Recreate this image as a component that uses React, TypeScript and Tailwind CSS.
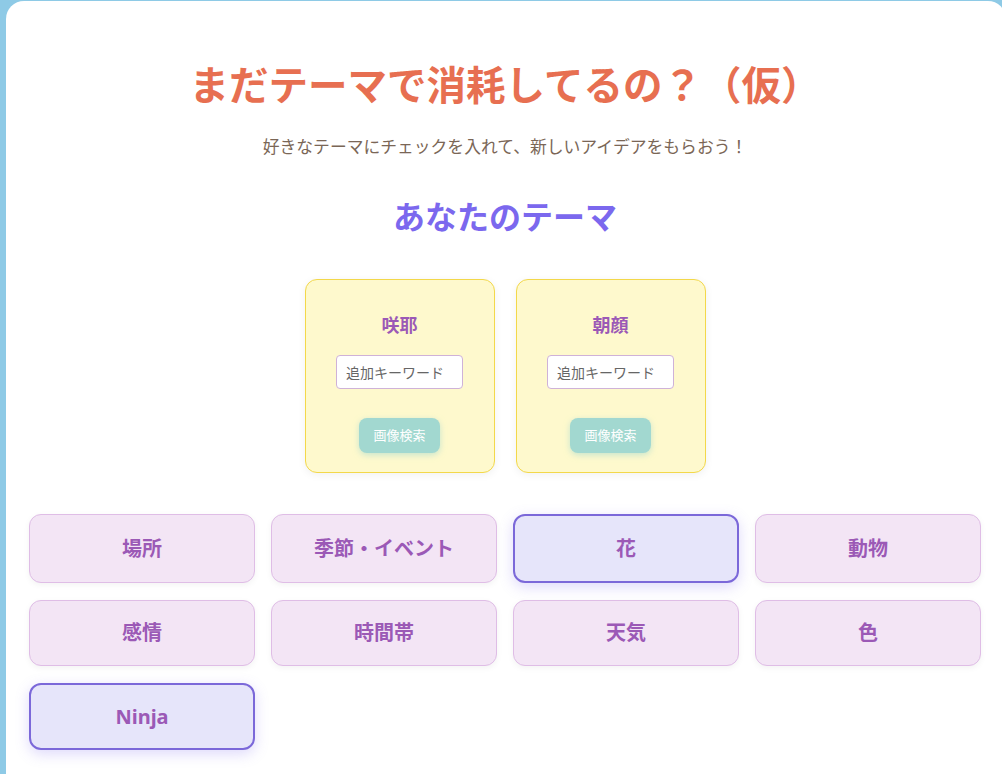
import React, { useState } from 'react';

const FONT = { fontFamily: '"Noto Sans", "Noto Sans CJK JP", sans-serif' };

const themes = ['咲耶', '朝顔'];

const categories = [
    '場所',
    '季節・イベント',
    '花',
    '動物',
    '感情',
    '時間帯',
    '天気',
    '色',
    'Ninja',
];

function ThemeCard({ name }: { name: string }) {
    return (
        <div className="flex w-[190px] flex-col items-center rounded-xl border border-[#f3d84a] bg-[#fef9cd] pt-[33px] pb-[19px] shadow-[0_2px_8px_rgba(0,0,0,0.06)]">
            <div className="text-[18px] leading-[24px] font-bold text-[#9b59b6]">{name}</div>
            <input
                type="text"
                placeholder="追加キーワード"
                className="mt-[18px] h-[34px] w-[127px] rounded border border-[#cfb2d8] bg-white px-[9px] text-[14px] text-[#555] placeholder:text-[#666] outline-none"
                style={FONT}
            />
            <button className="mt-[29px] h-[35px] w-[81px] rounded-lg bg-[#a2d8d0] text-[13px] text-white shadow-[0_2px_6px_rgba(162,216,208,0.6)]">
                画像検索
            </button>
        </div>
    );
}

export default function App() {
    const [selected, setSelected] = useState<string[]>(['花', 'Ninja']);

    const toggle = (c: string) =>
        setSelected((s) => (s.includes(c) ? s.filter((x) => x !== c) : [...s, c]));

    return (
        <div className="h-screen w-full overflow-hidden bg-[#8ecae6] pt-[1px] pl-[6px]" style={FONT}>
            <div className="min-h-[800px] w-[1000px] shrink-0 rounded-[18px] bg-white pt-[60px] pr-[25px] pl-[23px]">
                <h1 className="text-center text-[39.5px] leading-[48px] font-bold text-[#e76f51]">
                    まだテーマで消耗してるの？（仮）
                </h1>
                <p className="mt-[26px] text-center text-[16.8px] leading-[24px] text-[#7a6656]">
                    好きなテーマにチェックを入れて、新しいアイデアをもらおう！
                </p>
                <h2 className="mt-[38px] text-center text-[32px] leading-[40px] font-bold text-[#7b68ee]">
                    あなたのテーマ
                </h2>

                <div className="mt-[42px] flex justify-center gap-[21px]">
                    {themes.map((t) => (
                        <ThemeCard key={t} name={t} />
                    ))}
                </div>

                <div className="mt-[41px] grid grid-cols-4 grid-rows-[69px_66px_67px] gap-x-4 gap-y-[17px]">
                    {categories.map((c) => {
                        const on = selected.includes(c);
                        return (
                            <button
                                key={c}
                                onClick={() => toggle(c)}
                                className={
                                    on
                                        ? 'rounded-xl border-2 border-[#7b68d9] bg-[#e6e5fa] text-[20px] font-bold text-[#9b59b6] shadow-[0_4px_14px_rgba(123,104,238,0.25)]'
                                        : 'rounded-xl border border-[#dfbde6] bg-[#f3e5f5] text-[20px] font-bold text-[#9b59b6] shadow-[0_2px_6px_rgba(0,0,0,0.05)]'
                                }
                            >
                                {c}
                            </button>
                        );
                    })}
                </div>
            </div>
        </div>
    );
}
